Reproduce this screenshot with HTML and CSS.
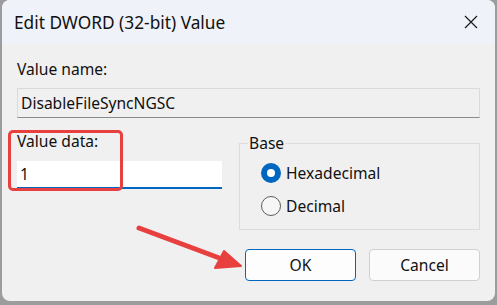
FILE: index.html
```html
<!DOCTYPE html>
<html>
<head>
<meta charset="utf-8">
<link rel="stylesheet" href="styles.css">
</head>
<body>
<div class="window">
  <div class="titlebar">
    <span class="title">Edit DWORD (32-bit) Value</span>
    <svg class="close" width="14" height="14" viewBox="0 0 14 14"><path d="M1 1 L13 13 M13 1 L1 13" stroke="#1a1a1a" stroke-width="1.2" fill="none"/></svg>
  </div>
  <div class="content">
    <div class="label">Value name:</div>
    <div class="namebox">DisableFileSyncNGSC</div>
    <div class="row">
      <div class="datacol">
        <div class="label">Value data:</div>
        <div class="databox">1</div>
      </div>
      <div class="base">
        <div class="legend">Base</div>
        <div class="radios">
          <div class="radio"><span class="dot on"></span>Hexadecimal</div>
          <div class="radio"><span class="dot"></span>Decimal</div>
        </div>
      </div>
    </div>
    <div class="buttons">
      <div class="btn ok">OK</div>
      <div class="btn">Cancel</div>
    </div>
  </div>
  <div class="highlight"></div>
  <svg class="arrow" width="497" height="305" viewBox="0 0 497 305">
    <line x1="139" y1="228" x2="222" y2="259" stroke="#e8403f" stroke-width="5" stroke-linecap="round"/>
    <polygon points="241,266 215,268 224,251" fill="#e8403f" stroke="#e8403f" stroke-width="2" stroke-linejoin="round"/>
  </svg>
</div>
</body>
</html>
```
FILE: styles.css
```css
html, body { margin: 0; padding: 0; }
body {
  width: 497px; height: 305px; overflow: hidden;
  background: #9c9c9c;
  font-family: "Noto Sans", "Open Sans", sans-serif;
  color: #111;
}
.window {
  position: relative;
  margin-left: 2px;
  width: 493px; height: 301px;
  background: #f0f0f0;
  border-radius: 8px;
  overflow: hidden;
}
.titlebar {
  height: 44px;
  background: #eff2f8;
  display: flex; align-items: center; justify-content: space-between;
  padding: 0 17px 0 12px;
}
.title { font-size: 17.3px; color: #111; margin-top: 1px; }
.content { padding: 15px 15px 0 15px; font-size: 15.6px; }
.label { line-height: 20px; height: 20px; }
.namebox {
  margin-top: 9px;
  height: 28px; line-height: 28px;
  padding-left: 3px;
  border: 1px solid #dadada;
  border-bottom-color: #8a8a8a;
  background: #f0f0f0;
}
.row { display: flex; margin-top: 8px; gap: 17px; }
.datacol { width: 205px; padding-top: 5px; }
.databox {
  margin-top: 10px;
  height: 26px; line-height: 27px;
  padding-left: 3px;
  background: #fff;
  border-bottom: 2px solid #0067c0;
}
.base {
  flex: 1;
  margin-top: 17px;
  height: 85px;
  border: 1px solid #dcdcdc;
  padding-left: 8px;
}
.legend {
  width: fit-content;
  margin-top: -11px;
  height: 20px; line-height: 20px;
  padding: 0 1px;
  background: #f0f0f0;
}
.radios { margin-top: 3px; padding-left: 13px; }
.radio { display: flex; align-items: center; height: 33px; }
.dot {
  width: 20px; height: 20px; border-radius: 50%;
  border: 1px solid #5c5c5c; box-sizing: border-box;
  margin-right: 5px; background: #f6f6f6;
  display: flex; align-items: center; justify-content: center;
}
.dot.on { background: #0067c0; border: none; }
.dot.on::after { content: ""; width: 8px; height: 8px; border-radius: 50%; background: #fff; }
.buttons { display: flex; justify-content: flex-end; gap: 13px; margin-top: 19px; }
.btn {
  width: 109px; height: 30px; line-height: 30px; text-align: center;
  border: 1px solid #d0d0d0; border-radius: 4px; background: #fbfbfb;
}
.btn.ok { border-color: #0067c0; background: #fdfdfd; }
.highlight {
  position: absolute; left: 6px; top: 130px; width: 109px; height: 55px;
  border: 3px solid #e8403f; border-radius: 5px;
}
.arrow { position: absolute; left: -2px; top: 0; pointer-events: none; }
```
